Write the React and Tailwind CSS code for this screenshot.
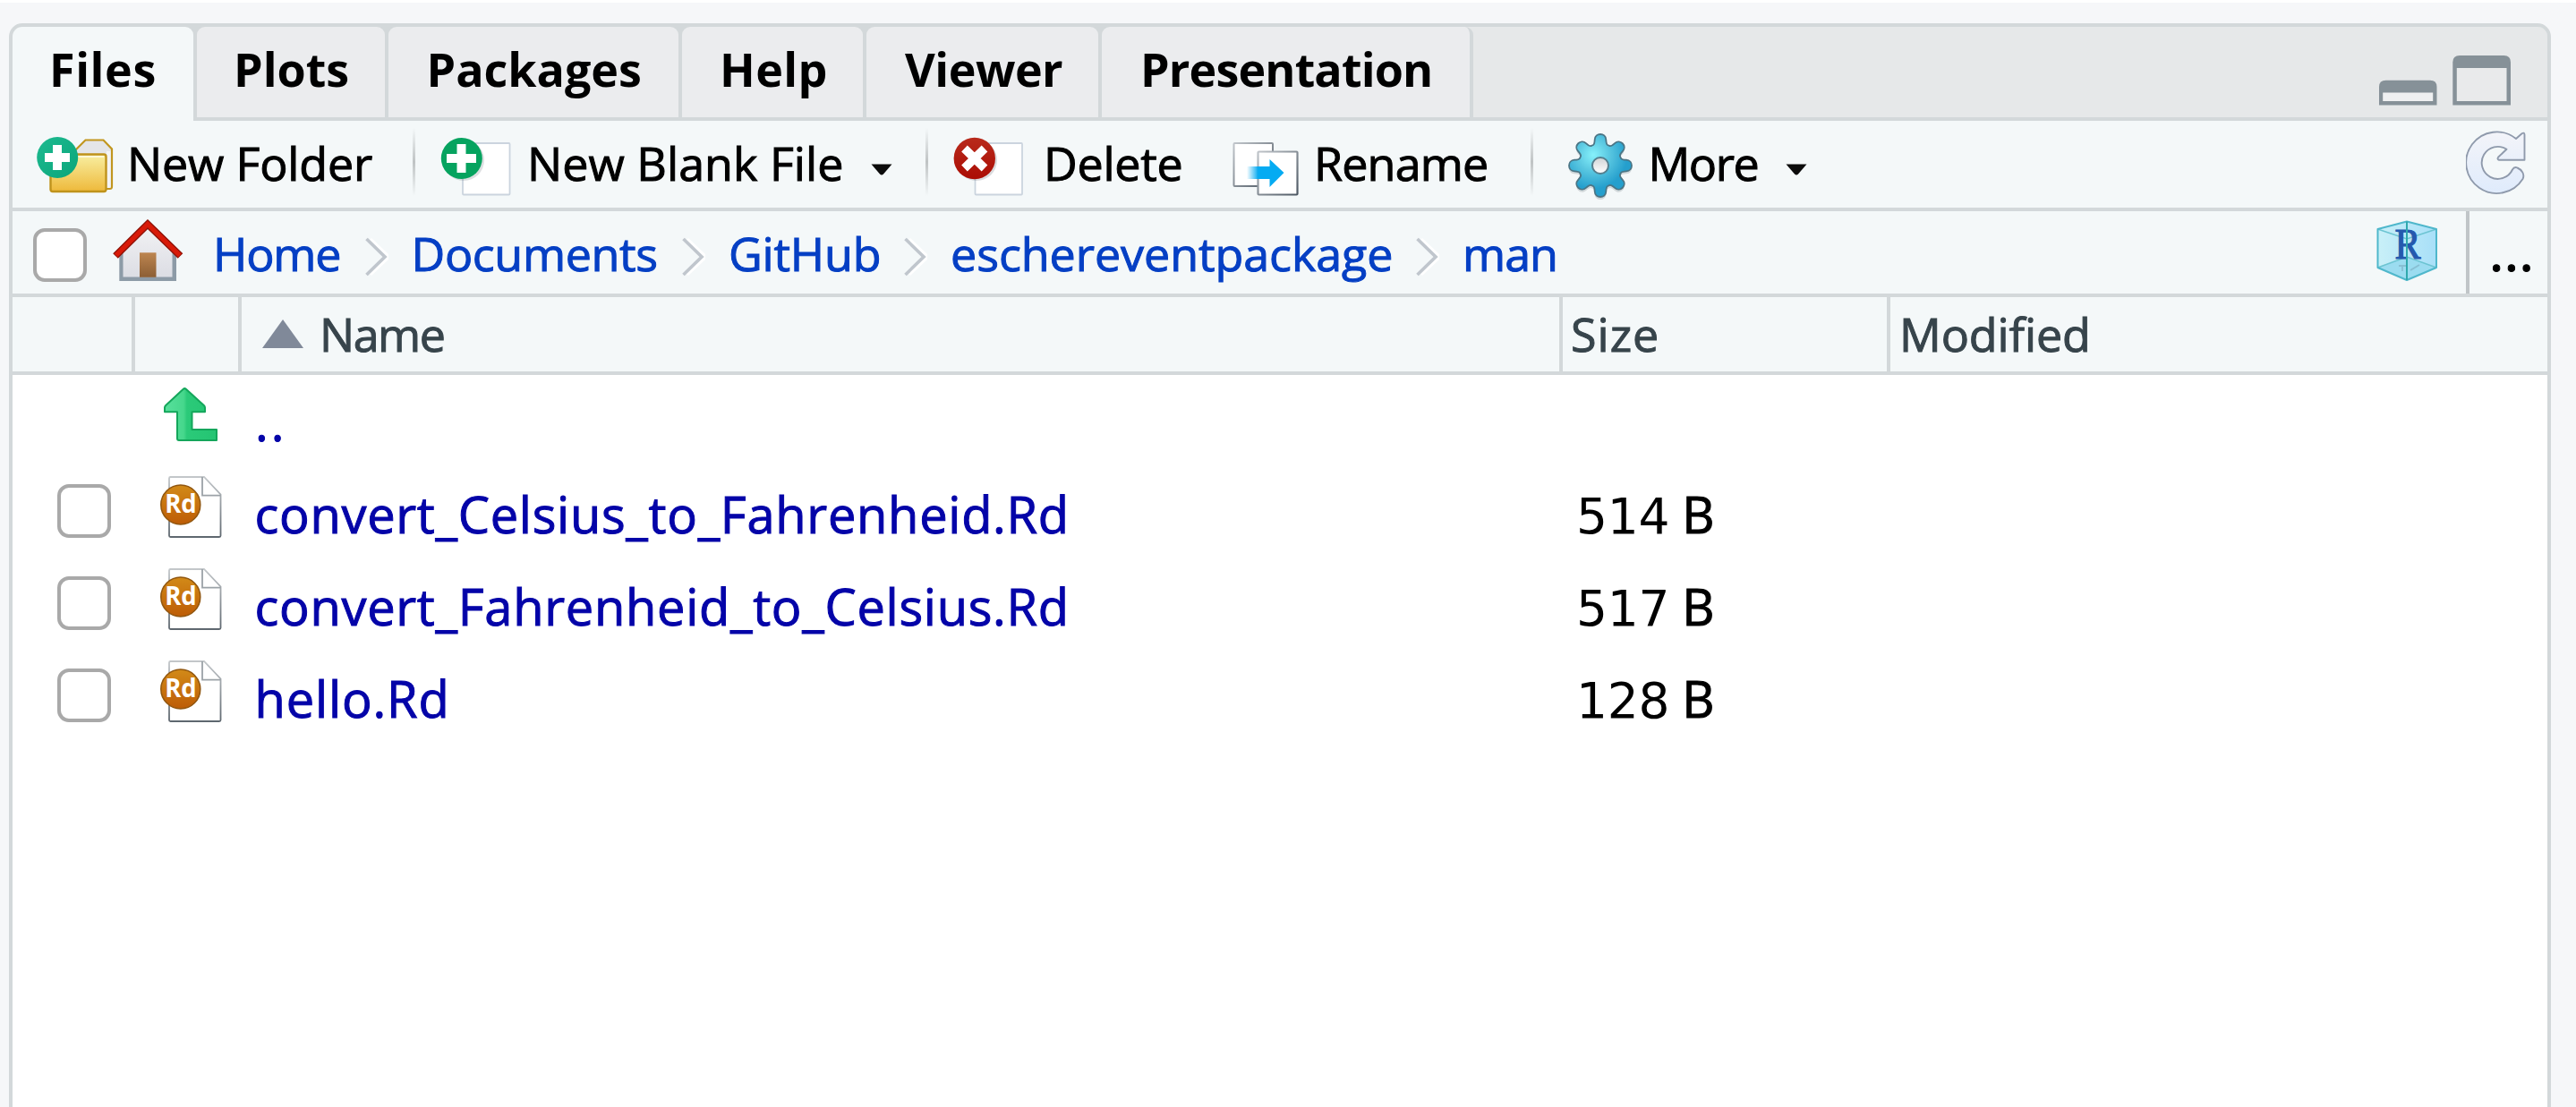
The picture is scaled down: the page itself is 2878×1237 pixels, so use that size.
const LINE = "#d3d8da";

const TABS = [
  { label: "Files", tab: "w-[202px] pl-[41px] tracking-[0.6px]", active: true },
  { label: "Plots", tab: "w-[210px] pl-[41px]" },
  { label: "Packages", tab: "w-[324px] pl-[42.500px]" },
  { label: "Help", tab: "w-[202px] pl-[42px] tracking-[0.4px]" },
  { label: "Viewer", tab: "w-[259px] pl-[43px] tracking-[-0.5px]" },
  { label: "Presentation", tab: "w-[415px] border-r-4 border-[#d3d8da] pl-[43px] tracking-[-0.85px]" },
];

const CRUMBS = [
  { label: "Home", cls: "w-[169.500px] tracking-[-1.2px]" },
  { label: "Documents", cls: "w-[302.500px] tracking-[-0.35px]" },
  { label: "GitHub", cls: "w-[196px] tracking-[-0.2px]" },
  { label: "eschereventpackage", cls: "w-[520px] tracking-[-0.05px]" },
  { label: "man", cls: "tracking-[-1px]", last: true },
];

const FILES = [
  { name: "convert_Celsius_to_Fahrenheid.Rd", size: "514", cls: "tracking-[0.7px]" },
  { name: "convert_Fahrenheid_to_Celsius.Rd", size: "517", cls: "tracking-[0.7px]" },
  { name: "hello.Rd", size: "128", cls: "tracking-[0.85px]" },
];

function Checkbox() {
  return <span className="block size-[60px] shrink-0 rounded-[13px] border-4 border-[#a9a9a9] bg-white" />;
}

function Separator({ className }) {
  return (
    <span className={`h-[76px] w-[3px] shrink-0 bg-linear-to-b from-transparent via-[#bfc3c4] to-transparent ${className}`} />
  );
}

function Caret({ className }) {
  return (
    <svg className={`shrink-0 ${className}`} width="24" height="13" viewBox="0 0 24 13">
      <path d="M0.5 0.5H23.5L14 11.5Q12 13.5 10 11.5Z" fill="#0c0c0c" />
    </svg>
  );
}

function NewFolderIcon() {
  return (
    <svg className="shrink-0" width="88" height="70" viewBox="40 150 88 70">
      <defs>
        <linearGradient id="folder" x1="0" y1="0" x2="0" y2="1">
          <stop offset="0" stopColor="#f8efa2" />
          <stop offset="1" stopColor="#eeb93b" />
        </linearGradient>
        <linearGradient id="addTeal" x1="0" y1="0" x2="1" y2="1">
          <stop offset="0" stopColor="#1dba90" />
          <stop offset="1" stopColor="#0ba57a" />
        </linearGradient>
      </defs>
      <path d="M84 169L95.500 157.500H115.500L125 167.500V209.500Q125 212 122.500 212H84Z" fill="#e4e5e8" stroke="#c1961f" strokeWidth="2.200" />
      <rect x="119" y="170" width="4.500" height="41" fill="#f4f4f5" />
      <rect x="56.500" y="173.500" width="62" height="41.500" rx="2.500" fill="url(#folder)" stroke="#bf931c" strokeWidth="2.400" />
      <path d="M60 176H116" stroke="#fffbe8" strokeWidth="1.500" />
      <circle cx="64.200" cy="177" r="23" fill="url(#addTeal)" />
      <path d="M50 177H78M64 163V191" stroke="#fff" strokeWidth="10" />
    </svg>
  );
}

function NewFileIcon() {
  return (
    <svg className="shrink-0" width="80" height="72" viewBox="492 150 80 72">
      <rect x="517" y="160" width="52.500" height="57.500" rx="1" fill="#fff" stroke="#cbd4de" strokeWidth="1.800" />
      <circle cx="518" cy="179" r="23" fill="#44505a" opacity="0.18" />
      <circle cx="515.800" cy="177" r="23" fill="#06a35f" />
      <path d="M499 177H532M515.500 161V193" stroke="#fff" strokeWidth="10" />
    </svg>
  );
}

function DeleteIcon() {
  return (
    <svg className="shrink-0" width="80" height="72" viewBox="1065 150 80 72">
      <defs>
        <linearGradient id="del" x1="0" y1="0" x2="0" y2="1">
          <stop offset="0" stopColor="#b82a1c" />
          <stop offset="1" stopColor="#ab0d04" />
        </linearGradient>
      </defs>
      <rect x="1089.500" y="160" width="52.500" height="57.500" rx="1" fill="#fff" stroke="#cbd4de" strokeWidth="1.800" />
      <circle cx="1091" cy="179" r="23" fill="#44505a" opacity="0.2" />
      <circle cx="1088.800" cy="177" r="23.200" fill="url(#del)" />
      <path d="M1077.500 166L1100 188M1100 166L1077.500 188" stroke="#fff" strokeWidth="9.500" />
    </svg>
  );
}

function RenameIcon() {
  return (
    <svg className="shrink-0" width="76" height="64" viewBox="1376 157 76 64">
      <defs>
        <linearGradient id="sheet" x1="0" y1="0" x2="1" y2="1">
          <stop offset="0" stopColor="#c0c5ca" />
          <stop offset="1" stopColor="#4d5863" />
        </linearGradient>
        <linearGradient id="shaft" gradientUnits="userSpaceOnUse" x1="1393" y1="0" x2="1406" y2="0">
          <stop offset="0" stopColor="#05abf2" stopOpacity="0" />
          <stop offset="1" stopColor="#05abf2" />
        </linearGradient>
      </defs>
      <rect x="1378.500" y="160" width="43.500" height="48" rx="1" fill="#fff" stroke="url(#sheet)" strokeWidth="2" />
      <rect x="1405.500" y="169.500" width="44" height="48" rx="1" fill="#fff" stroke="url(#sheet)" strokeWidth="2.200" />
      <path d="M1393 186H1418.500V178L1434.500 193L1418.500 209V200H1393Z" fill="url(#shaft)" />
    </svg>
  );
}

const TEETH = [0, 45, 90, 135, 180, 225, 270, 315];
const GEAR = TEETH.map((deg, i) => {
  const at = (x, y) => {
    const a = (deg * Math.PI) / 180;
    return `${(x * Math.cos(a) - y * Math.sin(a)).toFixed(2)} ${(x * Math.sin(a) + y * Math.cos(a)).toFixed(2)}`;
  };
  return `${i ? "L" : "M"}${at(-8, -23)}Q${at(-6.5, -24)} ${at(-6.3, -29)}C${at(-6, -37)} ${at(6, -37)} ${at(6.3, -29)}Q${at(6.5, -24)} ${at(8, -23)}`;
}).join("") + "Z";

function GearIcon() {
  return (
    <svg className="shrink-0" width="76" height="80" viewBox="-38 -38 76 80">
      <defs>
        <radialGradient id="gear" gradientUnits="userSpaceOnUse" cx="-8" cy="-12" r="38">
          <stop offset="0" stopColor="#86f1fb" />
          <stop offset="0.45" stopColor="#5cc9e2" />
          <stop offset="1" stopColor="#259fcd" />
        </radialGradient>
        <linearGradient id="hub" x1="0" y1="0" x2="0" y2="1">
          <stop offset="0" stopColor="#d0d4d6" />
          <stop offset="1" stopColor="#ffffff" />
        </linearGradient>
      </defs>
      <path d={GEAR} transform="translate(0 3)" fill="#6b7780" opacity="0.25" />
      <path d={GEAR} fill="url(#gear)" stroke="#4b7585" strokeWidth="1.800" strokeLinejoin="round" />
      <circle r="9" fill="url(#hub)" stroke="#557f8e" strokeWidth="2" />
    </svg>
  );
}

function RefreshIcon() {
  return (
    <svg className="shrink-0" width="68" height="74" viewBox="2755 145 68 74">
      <defs>
        <linearGradient id="refresh" x1="0" y1="0" x2="0" y2="1">
          <stop offset="0" stopColor="#f3f4f9" />
          <stop offset="1" stopColor="#dfebfc" />
        </linearGradient>
      </defs>
      <path
        d="M2811 155L2817.500 149.200Q2820.300 147.500 2820.500 150.500V178.800H2792Q2789.500 178 2791.200 175.500L2800.500 166.800A18 18 0 1 0 2807 189.500Q2809 186 2812.500 187.500C2817.500 189.500 2821 195 2818.500 200A34.300 34.300 0 1 1 2811 155Z"
        fill="url(#refresh)"
        stroke="#8f9aac"
        strokeWidth="1.900"
        strokeLinejoin="round"
      />
    </svg>
  );
}

function HomeIcon() {
  return (
    <svg className="shrink-0" width="80" height="72" viewBox="125 244 80 72">
      <defs>
        <linearGradient id="door" x1="0" y1="0" x2="0" y2="1">
          <stop offset="0" stopColor="#bd8550" />
          <stop offset="1" stopColor="#8c5e34" />
        </linearGradient>
        <linearGradient id="wall" x1="0" y1="0" x2="0" y2="1">
          <stop offset="0" stopColor="#f2f2f4" />
          <stop offset="1" stopColor="#dcdde4" />
        </linearGradient>
      </defs>
      <path d="M133.300 282L165 252L197 282V314H133.300Z" fill="#8d9ba7" />
      <path d="M137.500 279L165 252L192.500 279V309.500H137.500Z" fill="url(#wall)" />
      <rect x="156" y="282.300" width="18.500" height="27.500" fill="url(#door)" />
      <path d="M129 286L165 250.500L201.500 286" fill="none" stroke="#8e1207" strokeWidth="8" />
      <path d="M129.600 285.400L165 250.500L200.900 285.400" fill="none" stroke="#d81a08" strokeWidth="5.200" />
    </svg>
  );
}

function Chevron() {
  return (
    <svg className="shrink-0" width="26" height="44" viewBox="0 0 26 44">
      <path d="M4.500 2L25.500 22L4.500 42" transform="translate(1.500 0)" fill="none" stroke="#fff" strokeWidth="3" />
      <path d="M1.500 2L22 22L1.500 42" fill="none" stroke="#c0c6cd" strokeWidth="3.600" />
    </svg>
  );
}

function ProjectIcon() {
  return (
    <svg className="shrink-0" width="70" height="70" viewBox="2654 245 70 70">
      <defs>
        <linearGradient id="cube" x1="0" y1="0" x2="1" y2="0">
          <stop offset="0" stopColor="#c9f0f8" />
          <stop offset="1" stopColor="#a8dff8" />
        </linearGradient>
      </defs>
      <path d="M2689 247.500L2722 256V299L2689 313L2656.500 299V256Z" fill="url(#cube)" />
      <path d="M2656.500 299L2689 287L2722 299L2689 313Z" fill="#9bdcf0" />
      <path d="M2680 297H2688M2684 297V303M2703 296L2693 302" fill="none" stroke="#7fb2c6" strokeWidth="1.800" opacity="0.7" />
      <path d="M2656.500 256L2689 267L2722 256M2656.500 299L2689 287L2722 299" fill="none" stroke="#6cc4d2" strokeWidth="1.600" />
      <path d="M2689 247.500L2722 256V299L2689 313L2656.500 299V256Z" fill="none" stroke="#4fb7cb" strokeWidth="2" strokeLinejoin="round" />
      <text x="2675.500" y="289" fontFamily="Liberation Serif, serif" fontSize="48" fill="#2459ae" stroke="#2459ae" strokeWidth="1.200" textLength="29" lengthAdjust="spacingAndGlyphs">R</text>
      <path d="M2689 247.500V313" stroke="#2fa9ad" strokeWidth="2" />
    </svg>
  );
}

function UpIcon() {
  return (
    <svg className="shrink-0" width="64" height="64" viewBox="181 430 64 64">
      <defs>
        <linearGradient id="up" gradientUnits="userSpaceOnUse" x1="184" y1="0" x2="243" y2="0">
          <stop offset="0" stopColor="#58e09c" />
          <stop offset="0.36" stopColor="#46d78c" />
          <stop offset="0.42" stopColor="#2bca79" />
          <stop offset="1" stopColor="#24c472" />
        </linearGradient>
      </defs>
      <path
        d="M204.800 434.800Q206.300 433.400 207.800 434.800L227.800 453Q229 454.200 229 455.500V460.300H214.500V480H242V492H200Q198 492 198 490V460.300H184V455.500Q184 454.200 185.200 453Z"
        fill="url(#up)"
        stroke="#14a65b"
        strokeWidth="2"
        strokeLinejoin="round"
      />
    </svg>
  );
}

function RdIcon() {
  return (
    <svg className="shrink-0" width="72" height="72" viewBox="178 531 72 72">
      <defs>
        <linearGradient id="doc" x1="0" y1="0" x2="0" y2="1">
          <stop offset="0" stopColor="#c3c7ca" />
          <stop offset="1" stopColor="#5e676f" />
        </linearGradient>
        <linearGradient id="badge" x1="0" y1="0" x2="0" y2="1">
          <stop offset="0" stopColor="#d28a18" />
          <stop offset="1" stopColor="#bd5c06" />
        </linearGradient>
      </defs>
      <path d="M190.500 533H228L246.500 552.500V598.500Q246.500 600 245 600H190.500Q189 600 189 598.500V534.500Q189 533 190.500 533Z" fill="#fff" stroke="url(#doc)" strokeWidth="1.800" />
      <path d="M226 533V553.600H246.500" fill="none" stroke="#9ba2a7" strokeWidth="1.800" />
      <circle cx="201.800" cy="564" r="22" fill="url(#badge)" stroke="#91560f" strokeWidth="1.500" />
      <text x="184.200" y="572.800" fontFamily="Open Sans, sans-serif" fontWeight="700" fontSize="28.500" fill="#fff" textLength="35.500" lengthAdjust="spacingAndGlyphs">Rd</text>
    </svg>
  );
}

function WindowControls() {
  return (
    <svg className="shrink-0" width="148" height="57" viewBox="2658 61 148 57">
      <path d="M2658 117.500V97Q2658 89.700 2665.500 89.700H2715Q2722.500 89.700 2722.500 97V117.500Z" fill="#869198" />
      <rect x="2662.200" y="103.500" width="56" height="9.500" fill="#eff0f1" />
      <path d="M2740.300 117.500V69.500Q2740.300 62 2748 62H2797.500Q2805 62 2805 69.500V117.500Z" fill="#869198" />
      <rect x="2744.800" y="76" width="55.700" height="37" fill="#e9eaeb" />
    </svg>
  );
}

function TabStrip() {
  return (
    <div className="flex h-[105px] shrink-0 bg-[#d3d8da]">
      <div className="z-10 flex gap-1">
        {TABS.map((t) => (
          <div
            key={t.label}
            className={`flex items-center rounded-t-[9px] font-bold ${t.tab} ${
              t.active ? "h-[105px] bg-[#f4f8f9] pb-[11px]" : "h-[101px] bg-[#ebecee] pb-[7px]"
            }`}
          >
            {t.label}
          </div>
        ))}
      </div>
      <div className="-ml-[12px] flex h-[101px] flex-1 items-end justify-end bg-[#e6e8e9] pr-[40px] pb-[13px]">
        <WindowControls />
      </div>
    </div>
  );
}

function Toolbar() {
  return (
    <div className="flex h-[101px] shrink-0 items-center border-b-4 border-[#d3d8da] pl-[26px]">
      <NewFolderIcon />
      <span className="ml-[14px] w-[319px] shrink-0 pb-[3px] tracking-[-0.15px]">New Folder</span>
      <Separator className="-mt-[6px]" />
      <span className="mt-[4px] ml-[28px] shrink-0"><NewFileIcon /></span>
      <span className="ml-[17px] w-[384px] shrink-0 pb-[3px] tracking-[0.05px]">New Blank File</span>
      <Caret className="mt-[11px]" />
      <Separator className="-mt-[6px] ml-[37px]" />
      <span className="mt-[4px] ml-[28px] shrink-0"><DeleteIcon /></span>
      <span className="ml-[21px] w-[210px] shrink-0 pb-[3px] tracking-[-0.25px]">Delete</span>
      <span className="mt-[11px] shrink-0"><RenameIcon /></span>
      <span className="ml-[16px] w-[242px] shrink-0 pb-[3px] tracking-[-0.85px]">Rename</span>
      <Separator className="-mt-[6px]" />
      <span className="mt-[6px] ml-[37px] shrink-0"><GearIcon /></span>
      <span className="ml-[15.500px] w-[153.500px] shrink-0 pb-[3px] tracking-[-1.4px]">More</span>
      <Caret className="mt-[11px]" />
      <span className="-mt-[3px] mr-[23px] ml-auto shrink-0"><RefreshIcon /></span>
    </div>
  );
}

function PathBar() {
  return (
    <div className="flex h-[96px] shrink-0 items-center border-b-4 border-[#d3d8da] pl-[23px] text-[#053fc4]">
      <span className="mt-[5px]"><Checkbox /></span>
      <span className="-mt-[4px] mr-[33px] ml-[28px] shrink-0"><HomeIcon /></span>
      {CRUMBS.map((c) => (
        <span key={c.label} className="flex shrink-0 items-center">
          <span className={`pt-[2px] ${c.cls}`}>{c.label}</span>
          {!c.last && <span className="mt-[10px] mr-[26px]"><Chevron /></span>}
        </span>
      ))}
      <span className="-mt-[4px] mr-[31px] ml-auto shrink-0"><ProjectIcon /></span>
      <span className="flex h-full w-[91px] shrink-0 items-center border-l-4 border-[#c0c5c8] pl-[23px] text-black">
        <span className="pt-[2px] font-semibold tracking-[2.500px]">...</span>
      </span>
    </div>
  );
}

function ColumnHeader() {
  return (
    <div className="grid h-[87px] shrink-0 grid-cols-[137px_119px_1476px_366px_1fr] border-b-4 border-[#d3d8da] text-[#37444b] *:border-[#d3d8da]">
      <div className="border-r-4" />
      <div className="border-r-4" />
      <div className="flex items-center border-r-4 pb-[2px] pl-[23px]">
        <svg className="shrink-0" width="46" height="32" viewBox="0 0 46 32">
          <path d="M23 0L46 32H0Z" fill="#808999" />
        </svg>
        <span className="ml-[18px] tracking-[-1.500px]">Name</span>
      </div>
      <div className="flex items-center border-r-4 pb-[2px] pl-[9px] tracking-[1px]">Size</div>
      <div className="flex items-center pb-[2px] pl-[10px] tracking-[-0.12px]">Modified</div>
    </div>
  );
}

function FileList() {
  return (
    <div className="flex-1 bg-white text-[56px] leading-[76px] text-[#0404a8]">
      <div className="flex h-[104px] items-center pl-[167px]">
        <span className="-mt-[18px]"><UpIcon /></span>
        <span className="ml-[40px] font-medium tracking-[3px]">..</span>
      </div>
      {FILES.map((f) => (
        <div key={f.name} className="flex h-[103px] items-center pl-[50px]">
          <span className="-mt-[7px]"><Checkbox /></span>
          <span className="-mt-[16px] ml-[54px]"><RdIcon /></span>
          <span className={`ml-[34.500px] w-[1476.500px] shrink-0 pb-[2px] ${f.cls}`}>{f.name}</span>
          <span className="pt-[2px] font-['DejaVu_Sans',sans-serif] text-[55px] tracking-[-0.3px] text-black [-webkit-text-stroke:0px]">
            {f.size}{" "}
            <span className="-ml-[3px] font-['Open_Sans',sans-serif] text-[56px] [-webkit-text-stroke:1px]">B</span>
          </span>
        </div>
      ))}
    </div>
  );
}

export default function App() {
  return (
    <div className="h-[1237px] w-[2878px] overflow-hidden border-t-[3px] border-white bg-[#f6f7f9] pt-[23px] pr-[28px] pl-[10px] font-['Open_Sans',sans-serif] text-[52px] leading-[72px] whitespace-nowrap text-black">
      <div
        className="flex h-[1240px] flex-col overflow-hidden rounded-t-[15px] border-4 bg-[#f4f8f9]"
        style={{ borderColor: LINE }}
      >
        <TabStrip />
        <div className="flex flex-1 flex-col [-webkit-text-stroke:1px]">
          <Toolbar />
          <PathBar />
          <ColumnHeader />
          <FileList />
        </div>
      </div>
    </div>
  );
}
